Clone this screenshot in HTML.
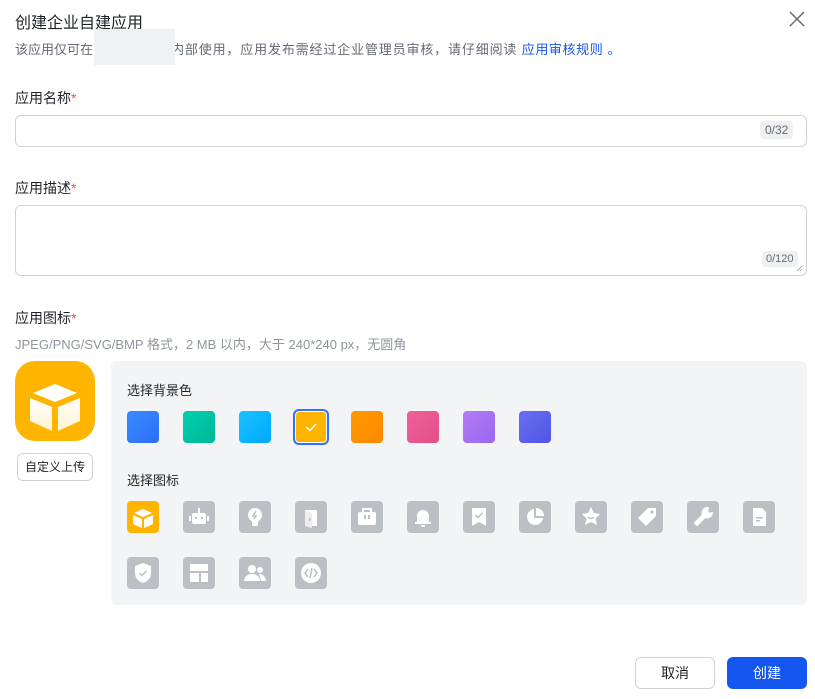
<!DOCTYPE html>
<html><head><meta charset="utf-8"><style>
*{margin:0;padding:0;box-sizing:border-box}
body{width:815px;height:699px;background:#fff;font-family:"Liberation Sans","Noto Sans CJK SC",sans-serif;position:relative;overflow:hidden;color:#1f2329}
.a{position:absolute}
.t{font-size:14px;white-space:nowrap}
.req{color:#f54a45}
.inp{position:absolute;border:1px solid #d0d3d6;border-radius:6px;background:#fff}
.cnt{position:absolute;font-size:12px;color:#646a73;background:#eff0f1;border-radius:4px;padding:2px 5px}
.sw{position:absolute;width:32px;height:32px;border-radius:4px;top:411px}
.ic{position:absolute;width:32px;height:32px;border-radius:4px;background:#bcbfc4}
.ic svg{width:32px;height:32px;display:block}
</style></head><body>
<div class="a" style="left:15px;top:9px;font-size:16px">创建企业自建应用</div>
<svg class="a" style="left:789px;top:11px" width="16" height="16" viewBox="0 0 16 16"><path d="M1 1L15 15M15 1L1 15" stroke="#646a73" stroke-width="1.5"/></svg>
<div class="a" style="left:15px;top:39px;font-size:13px;color:#646a73;white-space:nowrap">该应用仅可在<span style="display:inline-block;width:78px"></span><span style="letter-spacing:0.85px">内部使用，应用发布需经过企业管理员审核，请仔细阅读 </span><span style="color:#1456f0;letter-spacing:0.6px"> 应用审核规则 。</span></div>
<div class="a" style="left:94px;top:29px;width:81px;height:36px;background:#f0f1f2"></div>

<div class="a t" style="left:15px;top:88px">应用名称<span class="req">*</span></div>
<div class="inp" style="left:15px;top:115px;width:792px;height:32px"></div>
<div class="cnt" style="left:760px;top:121px">0/32</div>

<div class="a t" style="left:15px;top:178px">应用描述<span class="req">*</span></div>
<div class="inp" style="left:15px;top:205px;width:792px;height:71px"></div>
<div class="cnt" style="left:762px;top:251px;font-size:11px;padding:2px 4px">0/120</div>
<svg class="a" style="left:795px;top:264px" width="8" height="8"><path d="M7 2L2 7M7 5L5 7" stroke="#999" stroke-width="0.8"/></svg>

<div class="a t" style="left:15px;top:308px">应用图标<span class="req">*</span></div>
<div class="a" style="left:15px;top:334px;font-size:13px;color:#8f959e;white-space:nowrap">JPEG/PNG/SVG/BMP 格式，2 MB 以内，大于 240*240 px，无圆角</div>

<div class="a" style="left:15px;top:361px;width:80px;height:80px;border-radius:20px;background:#ffb400"></div>
<svg class="a" style="left:15px;top:361px" width="80" height="80" viewBox="0 0 80 80"><defs><linearGradient id="g" x1="0" y1="0" x2="0" y2="1"><stop offset="0" stop-color="#fff"/><stop offset="1" stop-color="#fff3d0"/></linearGradient></defs><path d="M40 23L62 32L40 41L18 32Z" fill="#fff"/><path d="M15 37L37 46V70L15 60Z" fill="url(#g)"/><path d="M65 37L43 46V70L65 60Z" fill="url(#g)"/></svg>
<div class="a" style="left:17px;top:453px;width:76px;height:28px;border:1px solid #d0d3d6;border-radius:6px;font-size:12px;text-align:center;line-height:26px">自定义上传</div>

<div class="a" style="left:111px;top:361px;width:696px;height:244px;background:#f3f4f6;border-radius:6px"></div>
<div class="a t" style="left:127px;top:380px;font-size:13px">选择背景色</div>
<div class="sw" style="left:127px;background:linear-gradient(135deg,#3a8bff,#2b6ef5)"></div>
<div class="sw" style="left:183px;background:linear-gradient(135deg,#00cfb0,#00b894)"></div>
<div class="sw" style="left:239px;background:linear-gradient(135deg,#19c3ff,#00a8ff)"></div>
<div class="sw" style="left:293px;top:409px;width:36px;height:36px;border:2px solid #3370ff;border-radius:6px;background:#ffb400;box-shadow:inset 0 0 0 1px #fff"></div>
<svg class="a" style="left:303px;top:421px" width="16" height="12"><path d="M3 6L7 9.5L13 3" stroke="#fff" stroke-width="1.5" fill="none"/></svg>
<div class="sw" style="left:351px;background:linear-gradient(135deg,#ff9a00,#ff8800)"></div>
<div class="sw" style="left:407px;background:linear-gradient(135deg,#f0609a,#e34f88)"></div>
<div class="sw" style="left:463px;background:linear-gradient(135deg,#b07cf7,#9c67f0)"></div>
<div class="sw" style="left:519px;background:linear-gradient(135deg,#6a6ff0,#4e55e4)"></div>

<div class="a t" style="left:127px;top:470px;font-size:13px">选择图标</div>
<div class="ic" style="left:127px;top:501px;background:#ffb400"><svg viewBox="0 0 32 32"><path d="M16 8L25 12L16 16L7 12Z" fill="#fff"/><path d="M6 14L15 18V27L6 23Z" fill="#fff"/><path d="M26 14L17 18V27L26 23Z" fill="#fff"/></svg></div>
<div class="ic" style="left:183px;top:501px"><svg viewBox="0 0 32 32"><rect x="9" y="12" width="14" height="11" rx="2" fill="#fff"/><rect x="15" y="7" width="2" height="5" fill="#fff"/><circle cx="13" cy="17" r="1.2" fill="#bcbfc4"/><circle cx="19" cy="17" r="1.2" fill="#bcbfc4"/><rect x="6" y="15" width="2" height="5" fill="#fff"/><rect x="24" y="15" width="2" height="5" fill="#fff"/></svg></div>
<div class="ic" style="left:239px;top:501px"><svg viewBox="0 0 32 32"><circle cx="16" cy="14" r="7" fill="#fff"/><rect x="13" y="20" width="6" height="5" rx="1" fill="#fff"/><path d="M17 10L14 15H17L15 18" stroke="#bcbfc4" stroke-width="1.5" fill="none"/></svg></div>
<div class="ic" style="left:295px;top:501px"><svg viewBox="0 0 32 32"><path d="M10 9H22V25H10Z" fill="#fff"/><path d="M10 9L17 12V27L10 25Z" fill="#eee"/><rect x="14" y="17" width="1.5" height="3" fill="#bcbfc4"/></svg></div>
<div class="ic" style="left:351px;top:501px"><svg viewBox="0 0 32 32"><rect x="7" y="11" width="18" height="13" rx="2" fill="#fff"/><path d="M12 11V8H20V11" stroke="#fff" stroke-width="2" fill="none"/><rect x="13" y="14" width="2" height="4" fill="#bcbfc4"/><rect x="17" y="14" width="2" height="4" fill="#bcbfc4"/></svg></div>
<div class="ic" style="left:407px;top:501px"><svg viewBox="0 0 32 32"><path d="M10 21V15A6 6 0 0 1 22 15V21H24V23H8V21Z" fill="#fff"/><rect x="14" y="24" width="4" height="2" rx="1" fill="#fff"/></svg></div>
<div class="ic" style="left:463px;top:501px"><svg viewBox="0 0 32 32"><path d="M9 7H23V25L16 21L9 25Z" fill="#fff"/><path d="M12.5 14L15 16.5L19.5 12" stroke="#bcbfc4" stroke-width="1.5" fill="none"/></svg></div>
<div class="ic" style="left:519px;top:501px"><svg viewBox="0 0 32 32"><path d="M15 8A8 8 0 1 0 24 17H15Z" fill="#fff"/><path d="M17 7A8 8 0 0 1 25 15H17Z" fill="#fff"/></svg></div>
<div class="ic" style="left:575px;top:501px"><svg viewBox="0 0 32 32"><path d="M16 6L19 12L25 13L20.5 17.5L22 24L16 21L10 24L11.5 17.5L7 13L13 12Z" fill="#fff"/><path d="M13 16Q16 19 19 16" stroke="#bcbfc4" stroke-width="1.3" fill="none"/></svg></div>
<div class="ic" style="left:631px;top:501px"><svg viewBox="0 0 32 32"><path d="M17 7H25V15L15 25L7 17Z" fill="#fff"/><circle cx="21" cy="11" r="1.5" fill="#bcbfc4"/></svg></div>
<div class="ic" style="left:687px;top:501px"><svg viewBox="0 0 32 32"><path d="M20 7A5 5 0 0 0 16 14L8 22L10 24L18 16A5 5 0 0 0 25 12L22 13L20 11L21 7Z" fill="#fff" stroke="#fff" stroke-width="2" stroke-linejoin="round"/></svg></div>
<div class="ic" style="left:743px;top:501px"><svg viewBox="0 0 32 32"><path d="M10 7H19L23 11V25H10Z" fill="#fff"/><rect x="13" y="16" width="7" height="1.5" fill="#bcbfc4"/><rect x="13" y="19" width="4" height="1.5" fill="#bcbfc4"/></svg></div>

<div class="ic" style="left:127px;top:557px"><svg viewBox="0 0 32 32"><path d="M16 6L24 9V16Q24 23 16 26Q8 23 8 16V9Z" fill="#fff"/><path d="M12.5 16L15 18.5L19.5 14" stroke="#bcbfc4" stroke-width="1.5" fill="none"/></svg></div>
<div class="ic" style="left:183px;top:557px"><svg viewBox="0 0 32 32"><rect x="7" y="7" width="18" height="7" fill="#fff"/><rect x="7" y="16" width="9" height="9" fill="#fff"/><rect x="18" y="16" width="7" height="9" fill="#fff"/></svg></div>
<div class="ic" style="left:239px;top:557px"><svg viewBox="0 0 32 32"><circle cx="13" cy="12" r="4" fill="#fff"/><path d="M5 24Q6 17 13 17Q20 17 21 24Z" fill="#fff"/><circle cx="21" cy="13" r="3" fill="#fff"/><path d="M20 17Q26 17 27 24H22Z" fill="#fff"/></svg></div>
<div class="ic" style="left:295px;top:557px"><svg viewBox="0 0 32 32"><circle cx="16" cy="16" r="10" fill="#fff"/><path d="M13 12L10 16L13 20M19 12L22 16L19 20M17 11L15 21" stroke="#bcbfc4" stroke-width="1.5" fill="none"/></svg></div>

<div class="a" style="left:635px;top:657px;width:80px;height:32px;border:1px solid #d0d3d6;border-radius:6px;font-size:14px;text-align:center;line-height:30px">取消</div>
<div class="a" style="left:727px;top:657px;width:80px;height:32px;background:#1456f0;color:#fff;border-radius:6px;font-size:14px;text-align:center;line-height:32px">创建</div>
</body></html>
